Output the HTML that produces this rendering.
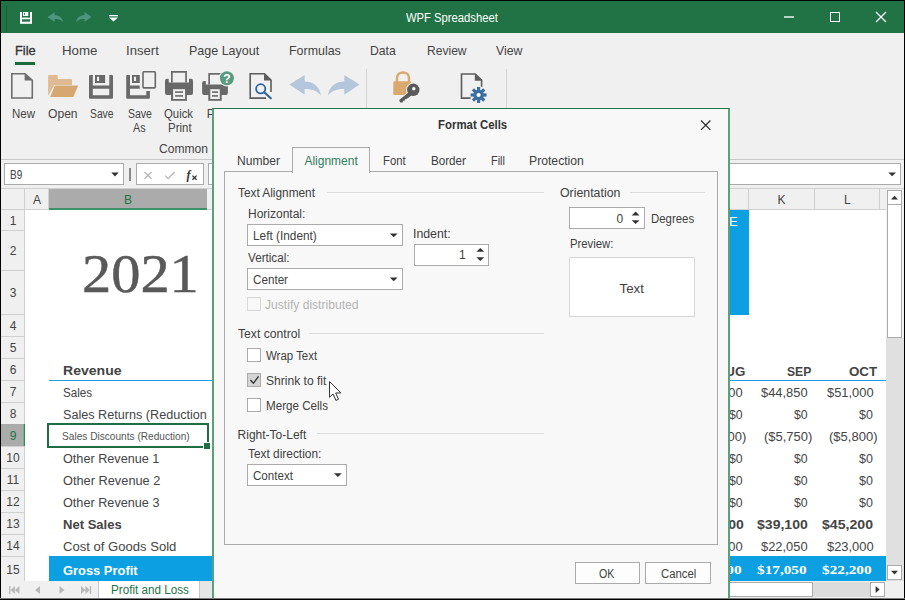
<!DOCTYPE html>
<html><head><meta charset="utf-8"><title>WPF Spreadsheet</title>
<style>
html,body{margin:0;padding:0;}
body{width:905px;height:600px;overflow:hidden;position:relative;background:#f0f0f0;font-family:"Liberation Sans",sans-serif;}
.a{position:absolute;box-sizing:border-box;}
.t{position:absolute;white-space:nowrap;line-height:1;transform-origin:0 50%;}
svg{position:absolute;overflow:visible;}
</style></head><body>
<!-- ===== window frame ===== -->
<div class="a" style="left:0;top:0;width:905px;height:600px;background:#000"></div>
<div class="a" style="left:1px;top:1px;width:903px;height:598px;background:#f0f0f0"></div>
<!-- title bar -->
<div class="a" style="left:1px;top:1px;width:903px;height:32px;background:#217346"></div>
<div class="a" style="left:6px;top:5px;width:1px;height:27px;background:#166534"></div>

<!-- menu underline -->
<div class="a" style="left:15px;top:62px;width:20px;height:3px;background:#1a6b3c"></div>

<!-- ribbon separators -->
<div class="a" style="left:366px;top:69px;width:1px;height:84px;background:#d4d4d4"></div>
<div class="a" style="left:506px;top:69px;width:1px;height:84px;background:#d4d4d4"></div>
<!-- ribbon bottom line -->
<div class="a" style="left:1px;top:159px;width:903px;height:1px;background:#c8c8c8"></div>
<!-- formula bar -->
<div class="a" style="left:4px;top:163px;width:120px;height:22px;background:#fff;border:1px solid #ababab"></div>
<div class="a" style="left:129px;top:168px;width:2px;height:13px;background:#8a8a8a"></div>
<div class="a" style="left:136px;top:163px;width:68px;height:22px;background:#fff;border:1px solid #ababab"></div>
<div class="a" style="left:208px;top:163px;width:693px;height:22px;background:#fff;border:1px solid #ababab"></div>

<!-- ===== grid ===== -->
<div class="a" style="left:1px;top:188px;width:886px;height:393px;background:#fff"></div>
<!-- column header strip -->
<div class="a" style="left:1px;top:188px;width:886px;height:22px;background:#f0f0f0;border-top:1px solid #d0d0d0;border-bottom:1px solid #d0d0d0"></div>
<div class="a" style="left:24px;top:189px;width:1px;height:20px;background:#d0d0d0"></div>
<div class="a" style="left:48px;top:189px;width:1px;height:20px;background:#d0d0d0"></div>
<div class="a" style="left:49px;top:189px;width:158px;height:21px;background:#ababab;border-bottom:2px solid #3d9166"></div>
<div class="a" style="left:748px;top:189px;width:1px;height:20px;background:#d0d0d0"></div>
<div class="a" style="left:814px;top:189px;width:1px;height:20px;background:#d0d0d0"></div>
<div class="a" style="left:879px;top:189px;width:1px;height:20px;background:#d0d0d0"></div>
<!-- row header strip -->
<div class="a" style="left:1px;top:210px;width:24px;height:371px;background:#f0f0f0;border-right:1px solid #d0d0d0"></div>
<div class="a" style="left:1px;top:230px;width:23px;height:1px;background:#d0d0d0"></div>
<div class="a" style="left:1px;top:270px;width:23px;height:1px;background:#d0d0d0"></div>
<div class="a" style="left:1px;top:314px;width:23px;height:1px;background:#d0d0d0"></div>
<div class="a" style="left:1px;top:336px;width:23px;height:1px;background:#d0d0d0"></div>
<div class="a" style="left:1px;top:358px;width:23px;height:1px;background:#d0d0d0"></div>
<div class="a" style="left:1px;top:380px;width:23px;height:1px;background:#d0d0d0"></div>
<div class="a" style="left:1px;top:402px;width:23px;height:1px;background:#d0d0d0"></div>
<div class="a" style="left:1px;top:424px;width:23px;height:1px;background:#d0d0d0"></div>
<div class="a" style="left:1px;top:446px;width:23px;height:1px;background:#d0d0d0"></div>
<div class="a" style="left:1px;top:468px;width:23px;height:1px;background:#d0d0d0"></div>
<div class="a" style="left:1px;top:490px;width:23px;height:1px;background:#d0d0d0"></div>
<div class="a" style="left:1px;top:512px;width:23px;height:1px;background:#d0d0d0"></div>
<div class="a" style="left:1px;top:534px;width:23px;height:1px;background:#d0d0d0"></div>
<div class="a" style="left:1px;top:556px;width:23px;height:1px;background:#d0d0d0"></div>

<div class="a" style="left:1px;top:424px;width:24px;height:22px;background:#ababab;border-right:1px solid #2e8b57"></div><div class="a" style="left:23px;top:424px;width:1px;height:22px;background:#7aae93"></div>
<!-- blue cells -->
<div class="a" style="left:730px;top:210px;width:19px;height:105px;background:#0c9fe1"></div>
<div class="a" style="left:49px;top:380px;width:838px;height:1px;background:#1ba1e2"></div>
<div class="a" style="left:49px;top:556px;width:838px;height:25px;background:#0c9fe1"></div>
<!-- selected cell -->
<div class="a" style="left:47px;top:423px;width:162px;height:25px;border:2px solid #1e6e42"></div>
<div class="a" style="left:203px;top:442px;width:7px;height:7px;background:#1e6e42;border-top:1px solid #fff;border-left:1px solid #fff"></div>
<!-- vertical scrollbar -->
<div class="a" style="left:886px;top:188px;width:18px;height:393px;background:#e0e0e0"></div>
<div class="a" style="left:886px;top:188px;width:18px;height:150px;background:#f0f0f0;border-top:1px solid #d0d0d0"></div>
<div class="a" style="left:887px;top:190px;width:15px;height:15px;background:#fff;border:1px solid #ababab"></div>
<div class="a" style="left:887px;top:204px;width:15px;height:134px;background:#fff;border:1px solid #ababab"></div>
<div class="a" style="left:887px;top:565px;width:15px;height:15px;background:#fff;border:1px solid #ababab"></div>
<!-- bottom bar -->
<div class="a" style="left:1px;top:581px;width:903px;height:18px;background:#f0f0f0"></div>
<div class="a" style="left:200px;top:581px;width:14px;height:18px;background:#e6e6e6"></div>
<div class="a" style="left:98px;top:581px;width:102px;height:17px;background:#fff;border-left:1px solid #c6c6c6;border-right:1px solid #c6c6c6"></div>
<div class="a" style="left:730px;top:582px;width:140px;height:15px;background:#dcdcdc"></div>
<div class="a" style="left:725px;top:582px;width:88px;height:15px;background:#fff;border:1px solid #ababab"></div>
<div class="a" style="left:870px;top:582px;width:15px;height:15px;background:#fff;border:1px solid #ababab"></div>
<svg width="905" height="600" viewBox="0 0 905 600" style="left:0;top:0">
<!-- title: save -->
<g>
<rect x="20" y="12" width="12" height="11.8" fill="#fff"/>
<rect x="22" y="11.9" width="1" height="5.6" fill="#217346"/>
<rect x="24.1" y="12.8" width="0.9" height="2.2" fill="#217346"/>
<rect x="28.3" y="11.9" width="1.7" height="5.6" fill="#217346"/>
<rect x="22" y="16" width="8" height="1.5" fill="#217346"/>
<rect x="22" y="19.3" width="8" height="2.4" fill="#217346"/>
</g>
<!-- title undo / redo -->
<path d="M47.5 17 L54.6 12.2 L54.6 15.2 C59 15.2 62.4 17.4 63 22 C60.6 19.4 58 19 54.6 19 L54.6 21.8 Z" fill="#4e9580"/>
<path d="M91.6 17 L84.5 12.2 L84.5 15.2 C80.1 15.2 76.7 17.4 76.1 22 C78.5 19.4 81.1 19 84.5 19 L84.5 21.8 Z" fill="#4e9580"/>
<!-- title dropdown -->
<rect x="109" y="15" width="9" height="1.3" fill="#fff"/>
<path d="M109 17.5 H118 L113.5 21.5 Z" fill="#fff"/>
<!-- window buttons -->
<rect x="784" y="16" width="10" height="2" fill="#b9d3c4"/>
<rect x="830.5" y="12.5" width="9" height="9" fill="none" stroke="#fff" stroke-width="1"/>
<path d="M876 12 L886 22 M886 12 L876 22" stroke="#fff" stroke-width="1.2" fill="none"/>

<!-- ribbon: New -->
<path d="M11.8 73.7 H25 L32.3 80.3 V98 H11.8 Z" fill="none" stroke="#6e6e6e" stroke-width="1.6"/>
<path d="M24.6 73.4 V80.6 H32.6 Z" fill="#6e6e6e"/>
<!-- Open -->
<path d="M48.1 76 Q48.1 75 49.1 75 H56.8 Q57.8 75 57.8 76 V79 H71 Q72 79 72 80 V85 H54.2 L48.1 96 Z" fill="#dfba92"/>
<path d="M54.9 85.4 H78.2 L73.4 96.9 H50.1 Z" fill="#d6a770"/>
<!-- Save -->
<g fill="#696969">
<path d="M90 75 H92.8 V85.4 H109.3 V75 H112 Q113 75 113 76 V97.8 Q113 98.8 112 98.8 H90 Q89 98.8 89 97.8 V76 Q89 75 90 75 Z M92.8 88.7 V95.2 H109.3 V88.7 Z" fill-rule="evenodd"/>
<path d="M95 75 H105.1 V82.9 H95 Z M97 76.7 V81.1 H99.1 V76.7 Z" fill-rule="evenodd"/>
</g>
<!-- Save As -->
<g fill="#696969">
<path d="M127.2 75 H130 V85.4 H139.8 V88.7 H130 V95.2 H146.3 V91 H149.9 V97.8 Q149.9 98.8 148.9 98.8 H127.2 Q126.2 98.8 126.2 97.8 V76 Q126.2 75 127.2 75 Z"/>
<path d="M132 75 H139.8 V82.9 H132 Z M133.9 76.7 V81.1 H136.1 V76.7 Z" fill-rule="evenodd"/>
</g>
<rect x="143" y="71.7" width="12.3" height="16.2" rx="0.8" fill="none" stroke="#696969" stroke-width="1.6"/>
<!-- Quick Print -->
<g>
<path d="M167 78.8 H168.7 V82.6 H189 V78.8 H191 Q193 78.8 193 80.8 V93 Q193 95 191 95 H167 Q165 95 165 93 V80.8 Q165 78.8 167 78.8 Z" fill="#696969"/>
<path d="M171.85 82.6 V71.85 H186.05 V82.6" fill="none" stroke="#696969" stroke-width="1.7"/>
<rect x="171" y="88.4" width="15.9" height="12.4" fill="#696969"/>
<rect x="173.1" y="89.2" width="12" height="9.8" fill="#f0f0f0"/>
<rect x="175.1" y="91.3" width="7.9" height="1.6" fill="#696969"/>
<rect x="175.1" y="95.1" width="7.9" height="1.6" fill="#696969"/>
</g>
<!-- Print with ? -->
<g>
<path d="M204.1 80.9 H205.8 V84.4 H224 V80.9 H225.9 Q227.9 80.9 227.9 82.9 V93 Q227.9 95 225.9 95 H204.1 Q202.1 95 202.1 93 V82.9 Q202.1 80.9 204.1 80.9 Z" fill="#696969"/>
<path d="M209.15 84.4 V73.85 H222" fill="none" stroke="#696969" stroke-width="1.7"/>
<rect x="208.3" y="88.4" width="13.4" height="12.4" fill="#696969"/>
<rect x="210.3" y="89.2" width="9.5" height="9.8" fill="#f0f0f0"/>
<rect x="212" y="91.3" width="6" height="1.6" fill="#696969"/>
<rect x="212" y="95.1" width="6" height="1.6" fill="#696969"/>
<circle cx="226.9" cy="78.3" r="8.2" fill="#f0f0f0"/>
<circle cx="226.9" cy="78.3" r="7" fill="#5a9a80"/>
<text x="226.9" y="82.6" font-family="Liberation Sans, sans-serif" font-weight="bold" font-size="12" fill="#fff" text-anchor="middle">?</text>
</g>
<!-- Preview -->
<g>
<path d="M266 98.1 H250.2 V73.7 H264.4 L271 80 V92" fill="none" stroke="#5c5c5c" stroke-width="1.6"/>
<path d="M264 73.4 V80.6 H271.6 Z" fill="#5c5c5c"/>
<circle cx="260.7" cy="88.8" r="4.6" fill="#f0f0f0" stroke="#2e64a0" stroke-width="1.8"/>
<path d="M264.2 92.3 L270.8 98.2" stroke="#2e64a0" stroke-width="2.2" stroke-linecap="round"/>
</g>
<!-- Undo / Redo big -->
<path d="M289.4 84.6 L304.6 75 L304.6 81.4 C313 81.4 319.6 86 320.9 95.4 C316.5 90 311.5 88.9 304.6 88.9 L304.6 94.7 Z" fill="#b4c6dc"/>
<path d="M359.5 84.6 L344.3 75 L344.3 81.4 C335.9 81.4 329.3 86 328 95.4 C332.4 90 337.4 88.9 344.3 88.9 L344.3 94.7 Z" fill="#b4c6dc"/>
<!-- Lock + key -->
<g>
<path d="M397 82 V78 C397 74.5 399.5 72.4 403 72.4 C406.5 72.4 409 74.5 409 78 V82" fill="none" stroke="#d9a96e" stroke-width="2.5"/>
<rect x="393.3" y="81.2" width="17.7" height="13.8" rx="1" fill="#d9a96e"/>
<g stroke="#f0f0f0" stroke-width="2.2" fill="#f0f0f0">
<circle cx="413.3" cy="89.8" r="6.2"/>
<path d="M409.5 92 L399.2 100.2 L401.2 102.8 L411.8 94.6 Z"/>
</g>
<circle cx="413.3" cy="89.8" r="6.2" fill="#5a5a5a"/>
<path d="M409.8 91.6 L399.2 100 L400.2 102.6 L402.6 102.4 L403 100.8 L404.8 100.6 L405.4 99 L407 98.8 L412.2 94.8 Z" fill="#5a5a5a"/>
<circle cx="413.8" cy="88.7" r="1.7" fill="#fff"/>
</g>
<!-- Doc + gear -->
<g>
<path d="M470.6 98.1 H461.5 V74 H475.2 L481.6 80.2 V86.7" fill="none" stroke="#5c5c5c" stroke-width="1.6"/>
<path d="M474.8 73.6 V80.7 H482.2 Z" fill="#5c5c5c"/>
<g transform="translate(478.6 95)">
<circle r="5.2" fill="#3a6ea5"/>
<g fill="#3a6ea5">
<rect x="-1.6" y="-8" width="3.2" height="16"/>
<rect x="-1.6" y="-8" width="3.2" height="16" transform="rotate(45)"/>
<rect x="-1.6" y="-8" width="3.2" height="16" transform="rotate(90)"/>
<rect x="-1.6" y="-8" width="3.2" height="16" transform="rotate(135)"/>
</g>
<circle r="2.1" fill="#fff"/>
</g>
</g>
<!-- formula bar icons -->
<path d="M111.3 172.6 H118.7 L115 176.4 Z" fill="#333"/>
<path d="M144.5 172 L151.5 178.8 M151.5 172 L144.5 178.8" stroke="#b4b4b4" stroke-width="1.2" fill="none"/>
<path d="M165.2 175.6 L168.2 178.6 L174.6 172" stroke="#b4b4b4" stroke-width="1.2" fill="none"/>
<text x="186.6" y="179" font-family="Liberation Serif, serif" font-style="italic" font-weight="bold" font-size="12" fill="#333">f</text>
<path d="M192.4 175.6 L196.6 179.8 M196.6 175.6 L192.4 179.8" stroke="#333" stroke-width="1.3" fill="none"/>
<path d="M888.3 172.4 H896 L892.15 176.2 Z" fill="#333"/>
<!-- scrollbar arrows -->
<path d="M891 199.6 H898 L894.5 195.8 Z" fill="#333"/>
<path d="M891 570.8 H898 L894.5 574.6 Z" fill="#333"/>
<path d="M875.6 586 V593 L879.6 589.5 Z" fill="#333"/>
<!-- sheet nav -->
<g fill="#b8b8b8">
<rect x="9" y="586" width="1.4" height="8"/><path d="M15 586 V594 L10.6 590 Z"/><path d="M19.4 586 V594 L15 590 Z"/>
<path d="M40 586 V594 L35 590 Z"/>
<path d="M59.5 586 V594 L64.5 590 Z"/>
<path d="M81 586 V594 L85.4 590 Z"/><path d="M85.4 586 V594 L89.8 590 Z"/><rect x="89.8" y="586" width="1.4" height="8"/>
</g>
</svg>

<span class="t" style="left:406.20px;top:12.00px;font-size:12px;color:#ffffff;transform:scaleX(0.9371);">WPF Spreadsheet</span>
<span class="t" style="left:14.51px;top:44.00px;font-size:13px;color:#333;-webkit-text-stroke:0.3px #333;transform:scaleX(0.9890);">File</span>
<span class="t" style="left:62.28px;top:44.00px;font-size:13px;color:#444;transform:scaleX(1.0225);">Home</span>
<span class="t" style="left:126.49px;top:44.00px;font-size:13px;color:#444;transform:scaleX(1.0094);">Insert</span>
<span class="t" style="left:189.24px;top:44.00px;font-size:13px;color:#444;transform:scaleX(0.9614);">Page Layout</span>
<span class="t" style="left:289.04px;top:44.00px;font-size:13px;color:#444;transform:scaleX(0.9557);">Formulas</span>
<span class="t" style="left:370.16px;top:44.00px;font-size:13px;color:#444;transform:scaleX(0.9401);">Data</span>
<span class="t" style="left:426.57px;top:44.00px;font-size:13px;color:#444;transform:scaleX(0.9281);">Review</span>
<span class="t" style="left:496.20px;top:44.00px;font-size:13px;color:#444;transform:scaleX(0.9491);">View</span>
<span class="t" style="left:11.70px;top:108.00px;font-size:12px;color:#444;transform:scaleX(0.9573);">New</span>
<span class="t" style="left:47.80px;top:108.00px;font-size:12px;color:#444;transform:scaleX(1.0076);">Open</span>
<span class="t" style="left:89.50px;top:108.00px;font-size:12px;color:#444;transform:scaleX(0.8599);">Save</span>
<span class="t" style="left:128.30px;top:108.00px;font-size:12px;color:#444;transform:scaleX(0.8743);">Save</span>
<span class="t" style="left:133.30px;top:122.00px;font-size:12px;color:#444;transform:scaleX(0.8926);">As</span>
<span class="t" style="left:164.20px;top:108.00px;font-size:12px;color:#444;transform:scaleX(0.9472);">Quick</span>
<span class="t" style="left:167.50px;top:122.00px;font-size:12px;color:#444;transform:scaleX(0.9550);">Print</span>
<span class="t" style="left:206.70px;top:108.00px;font-size:12px;color:#444;">P</span>
<span class="t" style="left:159.20px;top:143.00px;font-size:12px;color:#444;transform:scaleX(1.0061);">Common</span>
<span class="t" style="left:9.50px;top:169.00px;font-size:12px;color:#444;transform:scaleX(0.8331);">B9</span>
<span class="t" style="left:33.00px;top:194.00px;font-size:12px;color:#444;">A</span>
<span class="t" style="left:123.90px;top:194.00px;font-size:12px;color:#217346;">B</span>
<span class="t" style="left:777.60px;top:194.00px;font-size:12px;color:#444;">K</span>
<span class="t" style="left:844.00px;top:194.00px;font-size:12px;color:#444;">L</span>
<span class="t" style="left:9.70px;top:215.00px;font-size:12px;color:#444444;">1</span>
<span class="t" style="left:9.70px;top:245.00px;font-size:12px;color:#444444;">2</span>
<span class="t" style="left:9.70px;top:287.00px;font-size:12px;color:#444444;">3</span>
<span class="t" style="left:9.70px;top:320.00px;font-size:12px;color:#444444;">4</span>
<span class="t" style="left:9.70px;top:342.00px;font-size:12px;color:#444444;">5</span>
<span class="t" style="left:9.70px;top:364.00px;font-size:12px;color:#444444;">6</span>
<span class="t" style="left:9.70px;top:386.00px;font-size:12px;color:#444444;">7</span>
<span class="t" style="left:9.70px;top:408.00px;font-size:12px;color:#444444;">8</span>
<span class="t" style="left:9.70px;top:430.00px;font-size:12px;color:#217346;">9</span>
<span class="t" style="left:6.36px;top:452.00px;font-size:12px;color:#444444;">10</span>
<span class="t" style="left:6.81px;top:474.00px;font-size:12px;color:#444444;">11</span>
<span class="t" style="left:6.36px;top:496.00px;font-size:12px;color:#444444;">12</span>
<span class="t" style="left:6.36px;top:518.00px;font-size:12px;color:#444444;">13</span>
<span class="t" style="left:6.36px;top:540.00px;font-size:12px;color:#444444;">14</span>
<span class="t" style="left:6.36px;top:564.00px;font-size:12px;color:#444444;">15</span>
<span class="t" style="left:81.74px;top:247.00px;font-size:54px;color:#595959;-webkit-text-stroke:0.5px #595959;font-family:'Liberation Serif', serif;transform:scaleX(1.0816);">2021</span>
<span class="t" style="left:62.70px;top:364.00px;font-size:13.33px;color:#444444;font-weight:bold;transform:scaleX(1.0536);">Revenue</span>
<span class="t" style="left:62.70px;top:386.00px;font-size:13.7px;color:#444444;transform:scaleX(0.8490);">Sales</span>
<span class="t" style="left:62.70px;top:408.00px;font-size:13.7px;color:#444444;transform:scaleX(0.9224);">Sales Returns (Reduction</span>
<span class="t" style="left:61.80px;top:431.00px;font-size:10.6px;color:#555;transform:scaleX(0.9555);">Sales Discounts (Reduction)</span>
<span class="t" style="left:62.70px;top:452.00px;font-size:13.7px;color:#444444;transform:scaleX(0.9245);">Other Revenue 1</span>
<span class="t" style="left:62.70px;top:474.00px;font-size:13.7px;color:#444444;transform:scaleX(0.9341);">Other Revenue 2</span>
<span class="t" style="left:62.70px;top:496.00px;font-size:13.7px;color:#444444;transform:scaleX(0.9252);">Other Revenue 3</span>
<span class="t" style="left:62.70px;top:518.00px;font-size:13.33px;color:#444444;font-weight:bold;transform:scaleX(0.9782);">Net Sales</span>
<span class="t" style="left:62.70px;top:540.00px;font-size:13.7px;color:#444444;transform:scaleX(0.9553);">Cost of Goods Sold</span>
<span class="t" style="left:62.70px;top:564.00px;font-size:13.33px;color:#ffffff;font-weight:bold;transform:scaleX(0.9680);">Gross Profit</span>
<span class="t" style="left:110.60px;top:584.00px;font-size:12px;color:#217346;transform:scaleX(0.9720);">Profit and Loss</span>
<span class="t" style="left:729.00px;top:215.00px;font-size:13.33px;color:#ffffff;">E</span>
<span class="t" style="left:725.37px;top:365.00px;font-size:13.33px;color:#444444;font-weight:bold;">UG</span>
<span class="t" style="left:787.00px;top:365.00px;font-size:13.33px;color:#444444;font-weight:bold;transform:scaleX(0.9111);">SEP</span>
<span class="t" style="left:849.00px;top:365.00px;font-size:13.33px;color:#444444;font-weight:bold;">OCT</span>
<span class="t" style="left:696.00px;top:386.00px;font-size:13.7px;color:#444444;transform:scaleX(0.9426);">$43,000</span>
<span class="t" style="left:761.00px;top:386.00px;font-size:13.7px;color:#444444;transform:scaleX(0.9426);">$44,850</span>
<span class="t" style="left:826.60px;top:386.00px;font-size:13.7px;color:#444444;transform:scaleX(0.9426);">$51,000</span>
<span class="t" style="left:729.00px;top:408.00px;font-size:13.7px;color:#444444;transform:scaleX(0.8967);">$0</span>
<span class="t" style="left:794.00px;top:408.00px;font-size:13.7px;color:#444444;transform:scaleX(0.8967);">$0</span>
<span class="t" style="left:859.40px;top:408.00px;font-size:13.7px;color:#444444;transform:scaleX(0.9095);">$0</span>
<span class="t" style="left:698.20px;top:430.00px;font-size:13.7px;color:#444444;transform:scaleX(0.9480);">($5,500)</span>
<span class="t" style="left:763.60px;top:430.00px;font-size:13.7px;color:#444444;transform:scaleX(0.9480);">($5,750)</span>
<span class="t" style="left:829.40px;top:430.00px;font-size:13.7px;color:#444444;transform:scaleX(0.9520);">($5,800)</span>
<span class="t" style="left:729.00px;top:452.00px;font-size:13.7px;color:#444444;transform:scaleX(0.8967);">$0</span>
<span class="t" style="left:794.00px;top:452.00px;font-size:13.7px;color:#444444;transform:scaleX(0.8967);">$0</span>
<span class="t" style="left:859.40px;top:452.00px;font-size:13.7px;color:#444444;transform:scaleX(0.9095);">$0</span>
<span class="t" style="left:729.00px;top:474.00px;font-size:13.7px;color:#444444;transform:scaleX(0.8967);">$0</span>
<span class="t" style="left:794.00px;top:474.00px;font-size:13.7px;color:#444444;transform:scaleX(0.8967);">$0</span>
<span class="t" style="left:859.40px;top:474.00px;font-size:13.7px;color:#444444;transform:scaleX(0.9095);">$0</span>
<span class="t" style="left:729.00px;top:496.00px;font-size:13.7px;color:#444444;transform:scaleX(0.8967);">$0</span>
<span class="t" style="left:794.00px;top:496.00px;font-size:13.7px;color:#444444;transform:scaleX(0.8967);">$0</span>
<span class="t" style="left:859.40px;top:496.00px;font-size:13.7px;color:#444444;transform:scaleX(0.9095);">$0</span>
<span class="t" style="left:692.60px;top:518.00px;font-size:13.33px;color:#444444;font-weight:bold;transform:scaleX(1.0552);">$37,500</span>
<span class="t" style="left:756.60px;top:518.00px;font-size:13.33px;color:#444444;font-weight:bold;transform:scaleX(1.0552);">$39,100</span>
<span class="t" style="left:822.00px;top:518.00px;font-size:13.33px;color:#444444;font-weight:bold;transform:scaleX(1.0593);">$45,200</span>
<span class="t" style="left:696.00px;top:540.00px;font-size:13.7px;color:#444444;transform:scaleX(0.9426);">$21,000</span>
<span class="t" style="left:761.00px;top:540.00px;font-size:13.7px;color:#444444;transform:scaleX(0.9426);">$22,050</span>
<span class="t" style="left:826.60px;top:540.00px;font-size:13.7px;color:#444444;transform:scaleX(0.9426);">$23,000</span>
<span class="t" style="left:692.00px;top:563.00px;font-size:13.33px;color:#ffffff;font-weight:bold;font-family:'Liberation Serif', serif;transform:scaleX(1.1454);">$16,500</span>
<span class="t" style="left:756.60px;top:563.00px;font-size:13.33px;color:#ffffff;font-weight:bold;font-family:'Liberation Serif', serif;transform:scaleX(1.1454);">$17,050</span>
<span class="t" style="left:822.40px;top:563.00px;font-size:13.33px;color:#ffffff;font-weight:bold;font-family:'Liberation Serif', serif;transform:scaleX(1.1454);">$22,200</span>

<!-- ===== dialog ===== -->
<div class="a" style="left:212px;top:108px;width:518px;height:492px;background:#f8f8f8;border-left:2px solid #5c9f7b;border-right:2px solid #5c9f7b;border-top:1px solid #22744a"></div>
<div class="a" style="left:224px;top:171px;width:494px;height:374px;background:#f8f8f8;border:1px solid #ababab"></div>
<div class="a" style="left:292px;top:147px;width:78px;height:26px;background:#f8f8f8;border:1px solid #ababab;border-bottom:none"></div>
<!-- group lines -->
<div class="a" style="left:327px;top:192px;width:217px;height:1px;background:#dcdcdc"></div>
<div class="a" style="left:630px;top:192px;width:75px;height:1px;background:#dcdcdc"></div>
<div class="a" style="left:309px;top:333px;width:235px;height:1px;background:#dcdcdc"></div>
<div class="a" style="left:317px;top:433px;width:227px;height:1px;background:#dcdcdc"></div>
<!-- combos -->
<div class="a" style="left:247px;top:224px;width:156px;height:22px;background:#fff;border:1px solid #ababab"></div>
<div class="a" style="left:247px;top:268px;width:156px;height:22px;background:#fff;border:1px solid #ababab"></div>
<div class="a" style="left:247px;top:464px;width:100px;height:22px;background:#fff;border:1px solid #ababab"></div>
<div class="a" style="left:414px;top:244px;width:75px;height:22px;background:#fff;border:1px solid #ababab"></div>
<div class="a" style="left:569px;top:207px;width:76px;height:22px;background:#fff;border:1px solid #ababab"></div>
<!-- preview -->
<div class="a" style="left:569px;top:257px;width:126px;height:60px;background:#fff;border:1px solid #d6d6d6"></div>
<!-- checkboxes -->
<div class="a" style="left:247px;top:297px;width:14px;height:14px;background:#f8f8f8;border:1px solid #d8d8d8"></div>
<div class="a" style="left:247px;top:348px;width:14px;height:14px;background:#fff;border:1px solid #ababab"></div>
<div class="a" style="left:247px;top:373px;width:14px;height:14px;background:#d4d4d4;border:1px solid #ababab"></div>
<div class="a" style="left:247px;top:398px;width:14px;height:14px;background:#fff;border:1px solid #ababab"></div>
<!-- buttons -->
<div class="a" style="left:575px;top:562px;width:65px;height:22px;background:#fdfdfd;border:1px solid #ababab"></div>
<div class="a" style="left:645px;top:562px;width:66px;height:22px;background:#fdfdfd;border:1px solid #ababab"></div>
<svg width="905" height="600" viewBox="0 0 905 600" style="left:0;top:0">
<path d="M701 120.5 L710.4 129.9 M710.4 120.5 L701 129.9" stroke="#333" stroke-width="1.3" fill="none"/>
<!-- combo arrows -->
<path d="M389.8 233.5 H397.6 L393.7 237.3 Z" fill="#333"/>
<path d="M389.8 277.5 H397.6 L393.7 281.3 Z" fill="#333"/>
<path d="M334 473.3 H341.8 L337.9 477.1 Z" fill="#333"/>
<!-- spin arrows -->
<path d="M476.4 251.8 H484.2 L480.3 248 Z" fill="#333"/>
<path d="M476.4 257.2 H484.2 L480.3 261 Z" fill="#333"/>
<path d="M631.7 215.4 H639.5 L635.6 211.6 Z" fill="#333"/>
<path d="M631.7 220.2 H639.5 L635.6 224 Z" fill="#333"/>
<!-- check -->
<path d="M250.4 380 L253.4 383.2 L258.6 376.4" stroke="#333" stroke-width="1.4" fill="none"/>
<!-- cursor -->
<path d="M329.5 381.5 V397.2 L333.1 394 L335.9 400.4 L338.5 399.3 L335.7 393 L340.9 392.9 Z" fill="#fff" stroke="#333" stroke-width="1" stroke-linejoin="round"/>
</svg>

<span class="t" style="left:437.50px;top:119.00px;font-size:12px;color:#333;font-weight:bold;transform:scaleX(0.9519);">Format Cells</span>
<span class="t" style="left:236.80px;top:155.00px;font-size:12px;color:#404040;transform:scaleX(1.0074);">Number</span>
<span class="t" style="left:304.40px;top:155.00px;font-size:12px;color:#2e7d5b;">Alignment</span>
<span class="t" style="left:383.30px;top:155.00px;font-size:12px;color:#404040;transform:scaleX(0.9401);">Font</span>
<span class="t" style="left:431.00px;top:155.00px;font-size:12px;color:#404040;transform:scaleX(0.9689);">Border</span>
<span class="t" style="left:490.60px;top:155.00px;font-size:12px;color:#404040;transform:scaleX(0.9071);">Fill</span>
<span class="t" style="left:528.80px;top:155.00px;font-size:12px;color:#404040;transform:scaleX(1.0158);">Protection</span>
<span class="t" style="left:238.00px;top:187.00px;font-size:12px;color:#404040;transform:scaleX(0.9865);">Text Alignment</span>
<span class="t" style="left:248.00px;top:208.00px;font-size:12px;color:#404040;">Horizontal:</span>
<span class="t" style="left:252.70px;top:230.00px;font-size:12px;color:#404040;transform:scaleX(0.9860);">Left (Indent)</span>
<span class="t" style="left:413.47px;top:228.00px;font-size:12px;color:#404040;transform:scaleX(1.0265);">Indent:</span>
<span class="t" style="left:459.00px;top:249.00px;font-size:12px;color:#404040;">1</span>
<span class="t" style="left:248.00px;top:252.00px;font-size:12px;color:#404040;transform:scaleX(0.9728);">Vertical:</span>
<span class="t" style="left:252.70px;top:274.00px;font-size:12px;color:#404040;transform:scaleX(0.9716);">Center</span>
<span class="t" style="left:265.40px;top:299.00px;font-size:12px;color:#b4b4b4;transform:scaleX(1.0083);">Justify distributed</span>
<span class="t" style="left:237.60px;top:328.00px;font-size:12px;color:#404040;transform:scaleX(1.0133);">Text control</span>
<span class="t" style="left:266.00px;top:350.00px;font-size:12px;color:#404040;transform:scaleX(0.9548);">Wrap Text</span>
<span class="t" style="left:266.00px;top:375.00px;font-size:12px;color:#404040;transform:scaleX(1.0051);">Shrink to fit</span>
<span class="t" style="left:266.00px;top:400.00px;font-size:12px;color:#404040;transform:scaleX(0.9685);">Merge Cells</span>
<span class="t" style="left:237.60px;top:429.00px;font-size:12px;color:#404040;">Right-To-Left</span>
<span class="t" style="left:248.00px;top:448.00px;font-size:12px;color:#404040;transform:scaleX(0.9905);">Text direction:</span>
<span class="t" style="left:252.70px;top:470.00px;font-size:12px;color:#404040;transform:scaleX(0.9662);">Context</span>
<span class="t" style="left:559.80px;top:187.00px;font-size:12px;color:#404040;transform:scaleX(1.0289);">Orientation</span>
<span class="t" style="left:616.50px;top:213.00px;font-size:12px;color:#404040;">0</span>
<span class="t" style="left:650.90px;top:213.00px;font-size:12px;color:#404040;transform:scaleX(0.9502);">Degrees</span>
<span class="t" style="left:569.80px;top:238.00px;font-size:12px;color:#404040;transform:scaleX(0.9435);">Preview:</span>
<span class="t" style="left:619.50px;top:282.00px;font-size:13.33px;color:#404040;">Text</span>
<span class="t" style="left:599.30px;top:568.00px;font-size:12px;color:#404040;transform:scaleX(0.8827);">OK</span>
<span class="t" style="left:660.60px;top:568.00px;font-size:12px;color:#404040;transform:scaleX(0.9431);">Cancel</span>
<!-- bottom/right black frame over dialog -->
<div class="a" style="left:0;top:598px;width:905px;height:1px;background:#7a7a7a"></div><div class="a" style="left:0;top:599px;width:905px;height:1px;background:#000"></div>
</body></html>
